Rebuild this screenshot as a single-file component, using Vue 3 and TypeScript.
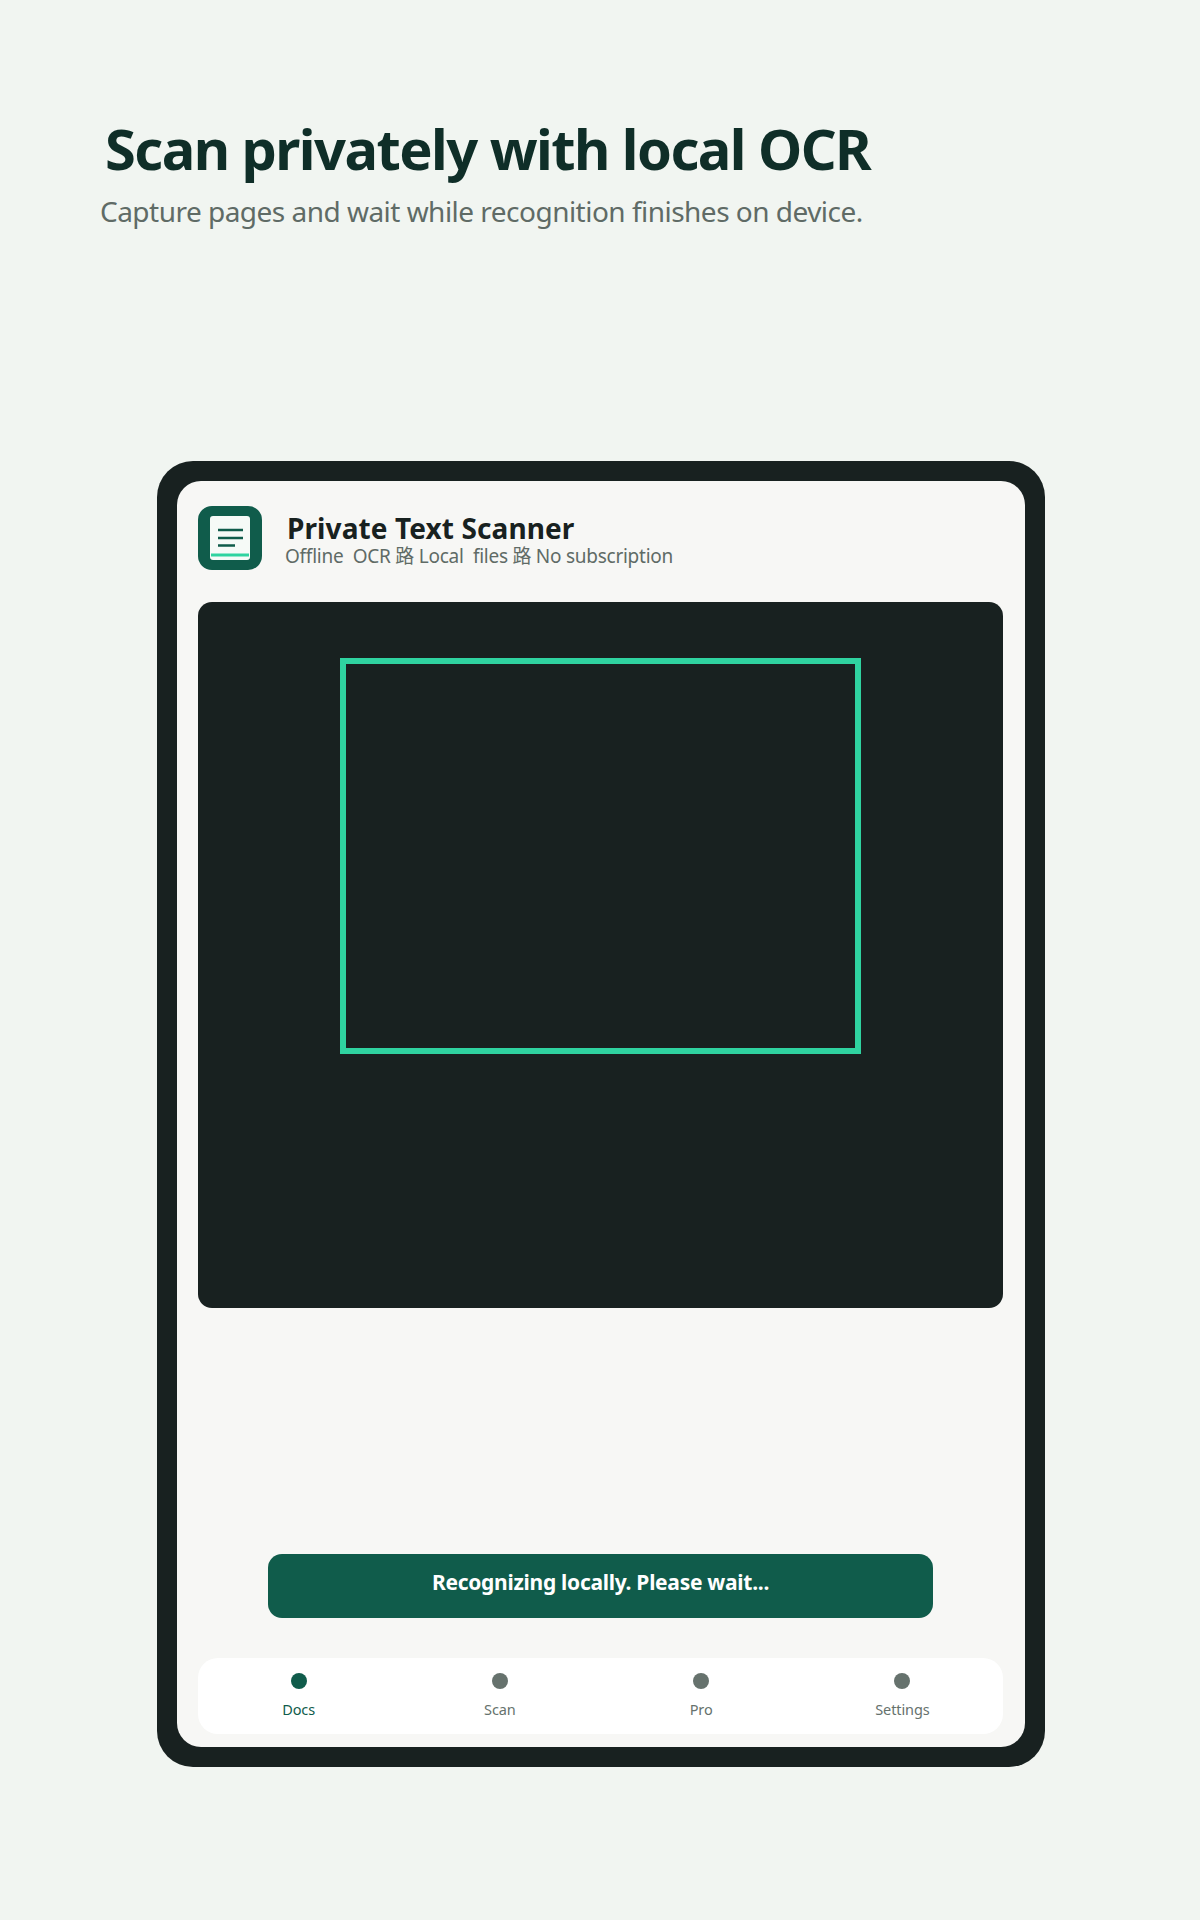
<script setup lang="ts">
const tabs = [
  { label: 'Docs', active: true },
  { label: 'Scan', active: false },
  { label: 'Pro', active: false },
  { label: 'Settings', active: false },
]
</script>

<template>
  <div class="page">
    <header class="hero">
      <h1 class="hero-title">Scan privately with local OCR</h1>
      <p class="hero-sub">Capture pages and wait while recognition finishes on device.</p>
    </header>
    <div class="frame">
      <div class="screen">
        <div class="app-head">
          <div class="logo">
            <svg width="64" height="64" viewBox="0 0 64 64">
              <rect x="12" y="10" width="40" height="44" rx="3" fill="#f6faf7" />
              <path d="M20 24h25M20 32h25M20 39.500h17" stroke="#105c4b" stroke-width="2.500" fill="none" />
              <path d="M13 49h38" stroke="#2fd3a0" stroke-width="3" fill="none" />
            </svg>
          </div>
          <div class="app-text">
            <div class="app-name">Private Text Scanner</div>
            <div class="app-meta">Offline&nbsp; OCR 路 Local&nbsp; files 路 No subscription</div>
          </div>
        </div>
        <div class="viewfinder">
          <div class="scan-box"></div>
        </div>
        <div class="spacer"></div>
        <div class="status">Recognizing locally. Please wait...</div>
        <nav class="tabs">
          <div v-for="t in tabs" :key="t.label" class="tab" :class="{ active: t.active }">
            <span class="dot"></span>
            <span class="tab-label">{{ t.label }}</span>
          </div>
        </nav>
      </div>
    </div>
  </div>
</template>

<style>
body { background: #f1f5f1; }
</style>

<style scoped>
.page {
  width: 1200px;
  height: 1920px;
  box-sizing: border-box;
  padding-top: 112px;
  background: #f1f5f1;
  font-family: "Noto Sans", "Noto Sans CJK SC", sans-serif;
  display: flex;
  flex-direction: column;
}
.hero { padding-left: 100px; height: 349px; }
.hero-title {
  margin: -2px 0 0 5px;
  font-size: 56px;
  line-height: 76px;
  font-weight: 700;
  letter-spacing: -1.55px;
  color: #0f2e28;
}
.hero-sub {
  margin: 6px 0 0;
  font-size: 28px;
  line-height: 38px;
  letter-spacing: -0.52px;
  color: #5f6b66;
}
.frame {
  width: 888px;
  height: 1306px;
  margin-left: 157px;
  box-sizing: border-box;
  padding: 20px;
  background: #182120;
  border-radius: 36px;
}
.screen {
  height: 100%;
  box-sizing: border-box;
  padding: 25px 22px 13px 21px;
  background: #f7f7f5;
  border-radius: 24px;
  display: flex;
  flex-direction: column;
}
.app-head { display: flex; align-items: center; gap: 23px; height: 64px; }
.logo { width: 64px; height: 64px; background: #105c4b; border-radius: 14px; }
.logo svg { display: block; }
.app-text { display: flex; flex-direction: column; padding-top: 3px; }
.app-name {
  margin-left: 2px;
  font-size: 28px;
  line-height: 32px;
  font-weight: 700;
  letter-spacing: 0.1px;
  color: #182120;
}
.app-meta {
  font-size: 19px;
  line-height: 24px;
  letter-spacing: -0.26px;
  white-space: nowrap;
  color: #5f6b66;
}
.viewfinder {
  margin-top: 32px;
  height: 706px;
  background: #182120;
  border-radius: 14px;
  display: flex;
  justify-content: center;
  align-items: flex-start;
  padding-top: 56px;
  box-sizing: border-box;
}
.scan-box {
  width: 521px;
  height: 396px;
  box-sizing: border-box;
  border: 6px solid #2fd3a0;
}
.spacer { flex: 1; }
.status {
  width: 665px;
  height: 64px;
  margin: 0 auto 40px;
  background: #105c4b;
  border-radius: 14px;
  color: #fff;
  font-size: 21px;
  font-weight: 700;
  letter-spacing: -0.28px;
  line-height: 56px;
  text-align: center;
}
.tabs {
  height: 76px;
  background: #fff;
  border-radius: 20px;
  display: grid;
  grid-template-columns: repeat(4, 1fr);
}
.tab {
  display: flex;
  flex-direction: column;
  align-items: center;
  padding-top: 15px;
  color: #66726d;
}
.tab.active { color: #105c4b; }
.dot {
  width: 16px;
  height: 16px;
  border-radius: 50%;
  background: #66726d;
}
.tab.active .dot { background: #105c4b; }
.tab-label { margin-top: 10px; font-size: 14.5px; line-height: 20px; letter-spacing: -0.1px; }
</style>
